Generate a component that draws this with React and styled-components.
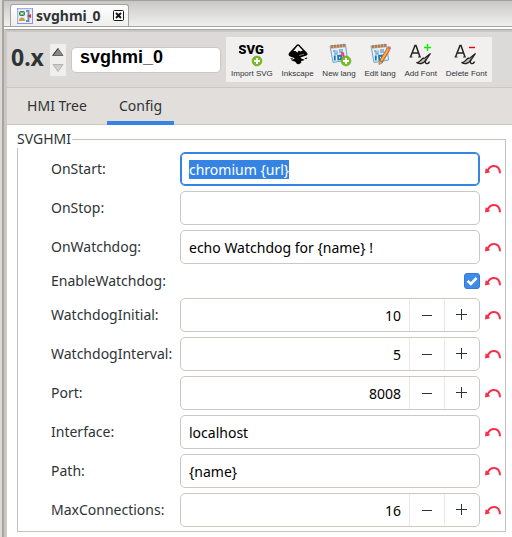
import React, { useEffect, useRef, useState } from "react";
import styled, { createGlobalStyle } from "styled-components";

const GlobalStyle = createGlobalStyle`
  * { box-sizing: border-box; }
  body {
    margin: 0;
    background: #fff;
    color: #2e3436;
    font-family: "Noto Sans", "Open Sans", sans-serif;
    font-size: 14px;
  }
  button, input { font: inherit; color: inherit; }
`;

const Window = styled.main`
  min-height: 100vh;
  display: flex;
  flex-direction: column;
  border-left: 2px solid #dcdad8;
  box-shadow: inset 2px 0 #a6a5a0;
  padding-left: 2px;
`;

const DocumentTabs = styled.div`
  height: 27px;
  display: flex;
  align-items: flex-end;
  padding-left: 6px;
  border-top: 1px solid #9f9f9d;
  border-bottom: 1px solid #a3a3a0;
  background: linear-gradient(#c9c8c7, #f0f0ef);
`;

const DocumentTab = styled.div`
  height: 22px;
  display: flex;
  align-items: center;
  padding: 0 4px 0 6px;
  border: 1px solid #a3a3a0;
  border-bottom: 0;
  border-radius: 3px 3px 0 0;
  background: linear-gradient(#fff, #efeeed);
  font-weight: 700;
  font-size: 14px;
`;

const DocumentName = styled.span`
  margin: 0 12px 0 3px;
  line-height: 20px;
`;

const CloseButton = styled.button`
  width: 11px;
  height: 11px;
  padding: 0;
  border: 0;
  background: none;
  display: flex;
`;

const Frame = styled.div`
  flex: 1;
  display: flex;
  flex-direction: column;
  margin-top: 2px;
  border-top: 1px solid #a3a3a0;
  border-left: 3px solid #cdc7c2;
  background: #fff;
`;

const Header = styled.header`
  height: 58px;
  display: flex;
  align-items: center;
  padding-left: 4px;
  border-top: 2px solid #cdc7c2;
  border-bottom: 1px solid #cdc7c2;
  background: #dcdad8;
`;

const Channel = styled.span`
  width: 39px;
  padding-bottom: 6px;
  font-size: 23px;
  line-height: 28px;
  font-weight: 700;
`;

const Stepper = styled.div`
  width: 16px;
  height: 32px;
  display: flex;
  flex-direction: column;
  background: #f0efee;
`;

const StepButton = styled.button`
  flex: 1;
  display: flex;
  align-items: center;
  justify-content: center;
  padding: 0;
  border: 0;
  background: none;
`;

const NameInput = styled.input`
  width: 150px;
  height: 26px;
  margin: 0 5px;
  padding: 0 8px 4px;
  border: 1px solid #cdc7c2;
  border-radius: 5px;
  background: #fff;
  color: #000;
  font-family: "Liberation Sans", sans-serif;
  font-size: 18px;
  font-weight: 700;
  outline: 0;
`;

const Tools = styled.div`
  width: 266px;
  height: 45px;
  display: flex;
  justify-content: space-between;
  padding: 5px 5px 3px;
  background: #f1f0ef;
`;

const Tool = styled.button`
  display: flex;
  flex-direction: column;
  align-items: center;
  gap: 1px;
  padding: 0;
  border: 0;
  background: none;
  font-family: "Liberation Sans", sans-serif;
  font-size: 8px;
  line-height: 10px;
  white-space: nowrap;
`;

const TabList = styled.div`
  height: 37px;
  display: flex;
  background: #e1dedb;
  border-bottom: 1px solid #cdc7c2;
`;

const Tab = styled.button`
  width: ${(p) => (p.$wide ? "100px" : "67px")};
  height: 37px;
  padding: 0 0 2px;
  border: 0;
  background: none;
  box-shadow: ${(p) => (p["aria-selected"] ? "inset 0 -4px #3584e4" : "none")};
`;

const Page = styled.div`
  padding: 5px 6px 5px 10px;
`;

const Group = styled.fieldset`
  min-width: 0;
  margin: 0;
  padding: 4px 4px 4px 33px;
  border: 1px solid #c6c2bd;
  display: flex;
  flex-direction: column;
  gap: 5px;
`;

const GroupTitle = styled.legend`
  margin-left: -34px;
  padding: 0 1px 0 0;
  line-height: 18px;
`;

const Row = styled.div`
  display: grid;
  grid-template-columns: 124px minmax(0, 1fr) 16px;
  column-gap: 5px;
  align-items: center;
  min-height: 24px;
`;

const Label = styled.label`
  line-height: 20px;
  white-space: nowrap;
`;

const TextInput = styled.input`
  width: 100%;
  height: 34px;
  padding: 0 8px;
  border: 1px solid #cdc7c2;
  border-radius: 5px;
  background: #fff;
  color: #000;
  outline: 0;
  &:focus {
    border-color: #3584e4;
    box-shadow: inset 0 0 0 1px #3584e4;
  }
  &::selection {
    background: #3584e4;
    color: #fff;
  }
`;

const Spin = styled.div`
  height: 34px;
  display: flex;
  border: 1px solid #cdc7c2;
  border-radius: 5px;
  background: #fff;
  overflow: hidden;
`;

const SpinInput = styled.input`
  flex: 1;
  min-width: 0;
  padding: 0 8px;
  border: 0;
  background: none;
  color: #000;
  text-align: right;
  outline: 0;
  appearance: textfield;
  &::-webkit-inner-spin-button { appearance: none; margin: 0; }
`;

const SpinButton = styled.button`
  width: 35px;
  display: flex;
  align-items: center;
  justify-content: center;
  padding: 0;
  border: 0;
  border-left: 1px solid #eae8e6;
  background: none;
`;

const Check = styled.input`
  appearance: none;
  justify-self: end;
  width: 16px;
  height: 16px;
  margin: 0;
  border: 1px solid #cdc7c2;
  border-radius: 3px;
  background: #fff;
  &:checked {
    border-color: #2f7ad8;
    background: url("data:image/svg+xml,%3Csvg xmlns='http://www.w3.org/2000/svg' viewBox='0 0 14 14'%3E%3Cpath d='M2.6 6.8 5.8 10 11.6 4' fill='none' stroke='white' stroke-width='2.6'/%3E%3C/svg%3E") center / 14px 14px no-repeat, #3f8ce8;
  }
`;

const ResetButton = styled.button`
  width: 16px;
  height: 16px;
  padding: 0;
  border: 0;
  background: none;
  display: flex;
`;

const UndoIcon = () => (
  <svg width="16" height="16" viewBox="0 0 16 16" aria-hidden="true">
    <path d="M2.5 9.8C4.2 6.2 6.4 5 9 5C12.4 5 14.7 7.8 15 12.2" fill="none" stroke="#f5304a" strokeWidth="2" />
    <path d="M.6 7.2 2.4 8.2 4.8 10.8 4.6 11.4 0 12.6Z" fill="#f5304a" />
  </svg>
);

const DocumentIcon = () => (
  <svg width="16" height="16" viewBox="0 0 16 16" aria-hidden="true">
    <rect x=".5" y=".5" width="15" height="15" fill="#eef2fc" stroke="#8d91e8" />
    <path d="M1 15V1H15" fill="none" stroke="#c6cbf2" />
    <rect x="2.5" y="3.5" width="5" height="4" rx="1" fill="#79b77d" stroke="#367c45" />
    <path d="M4 5.5H6" stroke="#dff3dc" />
    <path d="M2 13C2 10.5 3.3 9.5 5 9.5S8 10.5 8 13Z" fill="#c9a13c" />
    <path d="M9 3H11.5V13H9" fill="none" stroke="#6e91ba" strokeWidth="2" />
    <path d="M10 8 14 6V10Z" fill="#ef2525" />
  </svg>
);

const CloseIcon = () => (
  <svg width="11" height="11" viewBox="0 0 11 11" aria-hidden="true">
    <rect x=".5" y=".5" width="10" height="10" rx="1" fill="#fff" stroke="#161616" />
    <path d="M3 3 8 8M8 3 3 8" stroke="#161616" strokeWidth="2" />
  </svg>
);

const StepIcon = ({ down }) => (
  <svg width="12" height="8" viewBox="0 0 12 8" aria-hidden="true">
    {down ? (
      <path d="M1 .5H11L6 7.5Z" fill="#cfcfcf" stroke="#b3b3b3" />
    ) : (
      <>
        <path d="M1 7.5H11L6 .5Z" fill="#8a8a88" stroke="#666664" />
        <path d="M.5 7.5 6 .5" stroke="#333" />
      </>
    )}
  </svg>
);

const AddBadge = ({ x, y }) => (
  <>
    <circle cx={x} cy={y} r="5" fill="#78bd28" stroke="#5fa51b" strokeWidth=".5" />
    <path d={`M${x - 3} ${y}h6M${x} ${y - 3}v6`} stroke="#fff" strokeWidth="2" />
  </>
);

const SvgImportIcon = () => (
  <svg width="26" height="26" viewBox="0 0 26 26" aria-hidden="true">
    <text x="12" y="12" textAnchor="middle" fontFamily="Roboto, sans-serif" fontSize="13" fontWeight="900" fill="#000">SVG</text>
    <AddBadge x={18} y={19} />
  </svg>
);

const InkscapeIcon = () => (
  <svg width="26" height="26" viewBox="0 0 26 26" aria-hidden="true">
    <path d="M12 2.5Q13 1.9 14 2.5L22.2 11Q23.4 12.6 21.5 13.5L16 15.2C14.8 15.9 16.4 16.7 19.3 17.5C19.3 19 16.2 18.5 15.8 19.5C17.6 21 15 21.3 13.7 22.3C12.4 22.1 11.2 21.6 11 20.5C9.8 18.6 6.2 19.3 6.2 17.7C8.2 17.2 10.2 17.3 9.3 16C7.6 15.2 5.3 15.2 4 13.8Q3 12.5 4 11Z" fill="#050505" />
    <path d="M12.5 4Q13 3.5 13.5 4L17.7 8.4 15.4 9.6 13.8 8.6 12.3 10.5 10.5 8.9 8.4 9Z" fill="#f5f5f5" />
    <path d="M5 16.5 7.5 16.2 8 17 6.2 17.3ZM19.5 16.2 22 15.4 22.3 16.5 20.4 17.1Z" />
    <path d="M14 13.5 19 12.2" stroke="#777" />
  </svg>
);

const LangSheet = () => (
  <>
    <path d="M4 4 19.5 2.5 21.5 18 7 20.5Z" fill="#e2f0fa" stroke="#6ba5c8" />
    <path d="M4 4 19.5 2.5 20 5.3 4.5 6.7Z" fill="#d4a274" />
    <path d="M6 3v3M9 2.7v3M12 2.4v3M15 2.1v3M18 1.8v3" stroke="#8a5a3e" />
    <path d="M7 9h2v3h2V8.5M13 8h4M13 10h4" fill="none" stroke="#7aa4d0" strokeWidth="1.3" />
    <path d="M8.8 13.5v5M12 14l3-.4.3 3.5-3 .4Z" fill="none" stroke="#1976b9" strokeWidth="1.8" />
  </>
);

const NewLangIcon = () => (
  <svg width="26" height="26" viewBox="0 0 26 26" aria-hidden="true">
    <LangSheet />
    <path d="M15 11.5C17 10 18.5 12 16.5 13C19 13.5 18 16 15.5 15" fill="none" stroke="#e83d78" strokeWidth="1.7" />
    <AddBadge x={20} y={19} />
  </svg>
);

const EditLangIcon = () => (
  <svg width="26" height="26" viewBox="0 0 26 26" aria-hidden="true">
    <LangSheet />
    <path d="M21.5 7 14 19.5" stroke="#ba6424" strokeWidth="4" />
    <path d="M21.2 7.2 14.3 18.7" stroke="#ffad4b" strokeWidth="2" />
    <path d="M20 6 21.2 4.2Q23.8 3.8 24 6.3L23 8Z" fill="#df715b" />
    <path d="M12.2 18.3 15.8 20.5 12 22.5Z" fill="#dfbd93" stroke="#725441" strokeWidth=".6" />
  </svg>
);

const FontIcon = ({ remove }) => (
  <svg width="26" height="26" viewBox="0 0 26 26" aria-hidden="true">
    <path d="M2.5 15 7 3.5H8L12 15M4 11H10.5" fill="none" stroke="#222" strokeWidth="1.5" />
    <path d="M1.5 15h3M10 15h3" stroke="#333" />
    <path d="M22.5 11.5 15 17.5 17 19.5Z" fill="#999" stroke="#222" strokeWidth="1.2" />
    <path d="M16 16C12.5 16.5 12.5 21 8.5 20.5C11.5 22.3 15.5 22 17.5 18.5" fill="#bbb" stroke="#222" strokeWidth="1.3" />
    <path d="M18 17.5C15.5 22.5 20.5 22.5 21.5 19.5" fill="none" stroke="#222" strokeWidth="1.4" />
    {remove ? (
      <path d="M16 5.5H22" stroke="#e00" strokeWidth="1.4" />
    ) : (
      <path d="M16 5.5H23M19.5 2V9" stroke="#00f000" strokeWidth="1.4" />
    )}
  </svg>
);

const tools = [
  ["Import SVG", <SvgImportIcon />],
  ["Inkscape", <InkscapeIcon />],
  ["New lang", <NewLangIcon />],
  ["Edit lang", <EditLangIcon />],
  ["Add Font", <FontIcon />],
  ["Delete Font", <FontIcon remove />],
];

const fields = [
  { name: "OnStart", value: "chromium {url}", selected: true },
  { name: "OnStop", value: "" },
  { name: "OnWatchdog", value: "echo Watchdog for {name} !" },
  { name: "EnableWatchdog", value: true },
  { name: "WatchdogInitial", value: 10 },
  { name: "WatchdogInterval", value: 5 },
  { name: "Port", value: 8008 },
  { name: "Interface", value: "localhost" },
  { name: "Path", value: "{name}" },
  { name: "MaxConnections", value: 16 },
];

function Field({ name, value: initial, selected }) {
  const [value, setValue] = useState(initial);
  const input = useRef(null);

  useEffect(() => {
    if (selected) {
      input.current.focus();
      input.current.select();
    }
  }, [selected]);

  let control;
  if (typeof initial === "boolean") {
    control = (
      <Check id={name} type="checkbox" checked={value} onChange={(e) => setValue(e.target.checked)} />
    );
  } else if (typeof initial === "number") {
    control = (
      <Spin>
        <SpinInput id={name} type="number" value={value} onChange={(e) => setValue(Number(e.target.value))} />
        <SpinButton type="button" aria-label={`Decrease ${name}`} onClick={() => setValue(value - 1)}>
          <svg width="12" height="12" aria-hidden="true"><path d="M1 6.5h10" stroke="#2e3436" /></svg>
        </SpinButton>
        <SpinButton type="button" aria-label={`Increase ${name}`} onClick={() => setValue(value + 1)}>
          <svg width="12" height="12" aria-hidden="true"><path d="M0 5.5h11M5.5 0v11" stroke="#2e3436" /></svg>
        </SpinButton>
      </Spin>
    );
  } else {
    control = (
      <TextInput ref={input} id={name} type="text" value={value} onChange={(e) => setValue(e.target.value)} />
    );
  }

  return (
    <Row>
      <Label htmlFor={name}>{name}:</Label>
      {control}
      <ResetButton type="button" aria-label={`Reset ${name}`} onClick={() => setValue(initial)}>
        <UndoIcon />
      </ResetButton>
    </Row>
  );
}

export default function App() {
  return (
    <>
      <GlobalStyle />
      <Window>
        <DocumentTabs>
          <DocumentTab>
            <DocumentIcon />
            <DocumentName>svghmi_0</DocumentName>
            <CloseButton type="button" aria-label="Close"><CloseIcon /></CloseButton>
          </DocumentTab>
        </DocumentTabs>
        <Frame>
          <Header>
            <Channel>0.x</Channel>
            <Stepper>
              <StepButton type="button" aria-label="Up"><StepIcon /></StepButton>
              <StepButton type="button" aria-label="Down"><StepIcon down /></StepButton>
            </Stepper>
            <NameInput aria-label="Name" defaultValue="svghmi_0" />
            <Tools>
              {tools.map(([label, icon]) => (
                <Tool key={label} type="button">{icon}{label}</Tool>
              ))}
            </Tools>
          </Header>
          <TabList role="tablist">
            <Tab $wide type="button" role="tab" aria-selected={false}>HMI Tree</Tab>
            <Tab type="button" role="tab" aria-selected={true}>Config</Tab>
          </TabList>
          <Page>
            <Group>
              <GroupTitle>SVGHMI</GroupTitle>
              {fields.map((field) => <Field key={field.name} {...field} />)}
            </Group>
          </Page>
        </Frame>
      </Window>
    </>
  );
}
